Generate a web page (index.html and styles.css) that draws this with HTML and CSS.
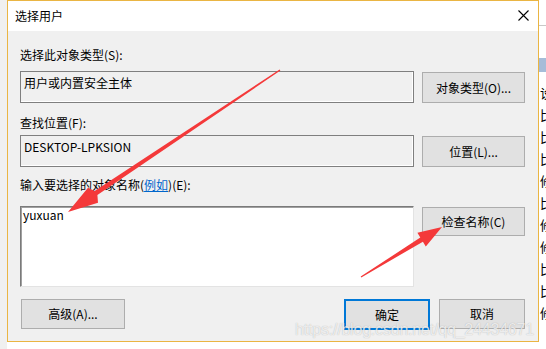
FILE: index.html
```html
<!DOCTYPE html>
<html lang="zh-CN">
<head>
<meta charset="utf-8">
<title>选择用户</title>
<link rel="stylesheet" href="styles.css">
</head>
<body>
<div class="left-strip"></div>
<div class="dialog">
  <div class="titlebar">
    <span class="title">选择用户</span>
    <svg class="close" width="11" height="11" viewBox="0 0 11 11"><path d="M0.5 0.5 L10.5 10.5 M10.5 0.5 L0.5 10.5" stroke="#000" stroke-width="1.1" fill="none"/></svg>
  </div>
  <div class="content">
    <div class="label l1">选择此对象类型(S):</div>
    <div class="row r1">
      <div class="box ro">用户或内置安全主体</div>
      <div class="btn b1">对象类型(O)...</div>
    </div>
    <div class="label l2">查找位置(F):</div>
    <div class="row r2">
      <div class="box ro">DESKTOP-LPKSION</div>
      <div class="btn b1">位置(L)...</div>
    </div>
    <div class="label l3">输入要选择的对象名称(<span class="link">例如</span>)(E):</div>
    <div class="row r3">
      <div class="box edit">yuxuan</div>
      <div class="btn b3">检查名称(C)</div>
    </div>
    <div class="footer">
      <div class="btn adv">高级(A)...</div>
      <div class="spacer"></div>
      <div class="btn ok">确定</div>
      <div class="btn cancel">取消</div>
    </div>
  </div>
</div>
<div class="right-strip">
  <div class="rs-line"></div>
  <div class="rs-sel"></div>
  <div class="rs-list">
    <span>设</span><span>比</span><span>比</span><span>比</span><span>修</span><span>比</span><span>修</span><span>修</span><span>比</span><span>比</span><span>修</span>
  </div>
</div>
<div class="watermark">https://blog.csdn.net/qq_24434671</div>
<svg class="arrows" width="546" height="349" viewBox="0 0 546 349">
  <polygon fill="#f4393a" points="280.4,70.6 279.6,69.4 94.6,190.9 88,187.8 68,212 98,202.8 97.4,195.1"/>
  <polygon fill="#f4393a" points="361.3,277.4 360.7,276.6 420.3,237.5 417.4,232.8 442,227 425.8,246.4 422.9,241.7"/>
</svg>
</body>
</html>
```
FILE: styles.css
```css
* { box-sizing: border-box; }
html, body { margin: 0; padding: 0; }
body {
  width: 546px;
  height: 349px;
  overflow: hidden;
  position: relative;
  display: flex;
  align-items: flex-start;
  background: #fff;
  font-family: "Noto Sans CJK SC", "Noto Sans", sans-serif;
  font-size: 12px;
  line-height: 16px;
  color: #000;
}
.left-strip { width: 7px; height: 349px; background: #f0f0f0; flex: none; }
.dialog {
  width: 532px;
  height: 342px;
  flex: none;
  border: 1px solid #eab543;
  display: flex;
  flex-direction: column;
  background: #f0f0f0;
}
.titlebar {
  height: 30px;
  flex: none;
  background: #fff;
  display: flex;
  align-items: center;
  justify-content: space-between;
  padding: 0 9px 0 7px;
}
.title { margin-top: -1px; }
.close { margin-top: -1px; }
.content {
  flex: 1;
  padding: 16px 13px 0 12px;
  display: flex;
  flex-direction: column;
}
.label { height: 16px; white-space: nowrap; }
.l2 { margin-top: 12px; }
.l3 { margin-top: 10px; }
.link { color: #0066cc; text-decoration: underline; }
.row { display: flex; gap: 8px; align-items: flex-start; }
.r1 { margin-top: 8px; }
.r2 { margin-top: 4px; }
.r3 { margin-top: 13px; }
.box { width: 394px; flex: none; white-space: nowrap; }
.ro {
  height: 32px;
  border: 1px solid #7f7f7f;
  box-shadow: inset -1px -1px 0 #fff;
  padding: 3px 3px;
}
.edit {
  height: 81px;
  background: #fff;
  border: 1px solid;
  border-color: #7a7a7a #e3e3e3 #e3e3e3 #7a7a7a;
  box-shadow: inset 1px 1px 0 #a0a0a0;
  padding: 0 2px;
}
.btn {
  background: #e1e1e1;
  border: 1px solid #adadad;
  display: flex;
  align-items: center;
  justify-content: center;
  white-space: nowrap;
  flex: none;
}
.b1 { width: 103px; height: 31px; margin-top: 1px; }
.b3 { width: 103px; height: 29px; margin-top: 1px; }
.footer { display: flex; margin-top: 12px; }
.spacer { flex: 1; }
.adv { width: 104px; height: 30px; margin-left: 1px; }
.ok { width: 86px; height: 31px; border: 2px solid #0078d7; margin-right: 9px; }
.cancel { width: 86px; height: 30px; }
.right-strip {
  width: 7px;
  height: 349px;
  flex: none;
  position: relative;
  overflow: hidden;
  background: #fff;
  display: flex;
  flex-direction: column;
}
.rs-line { height: 1px; background: #c8c8c8; margin-top: 25px; }
.rs-sel { height: 14px; background: #a6bcd8; margin-top: 32px; }
.rs-list {
  display: flex;
  flex-direction: column;
  gap: 6px;
  margin-top: 13px;
  margin-left: 1px;
  font-size: 13px;
}
.watermark {
  position: absolute;
  left: 295px;
  top: 320px;
  font-family: "Liberation Sans", Arial, sans-serif;
  font-size: 16px;
  line-height: 20px;
  color: rgba(255, 255, 255, 0.75);
  text-shadow: 0 0 1px rgba(90, 90, 90, 0.45);
  letter-spacing: -0.2px;
  white-space: nowrap;
}
.arrows { position: absolute; left: 0; top: 0; pointer-events: none; }
```
